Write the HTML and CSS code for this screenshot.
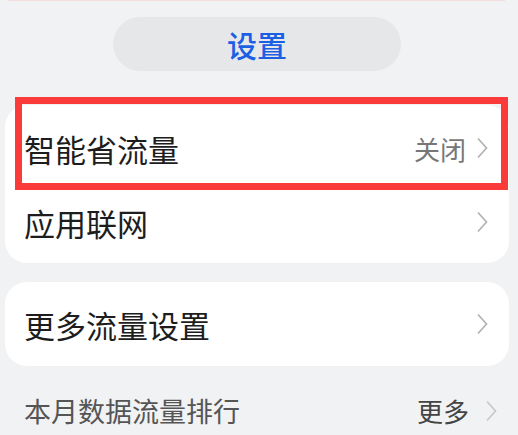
FILE: index.html
```html
<!DOCTYPE html>
<html lang="zh-CN">
<head>
  <meta charset="UTF-8">
  <title>流量管理</title>
  <link rel="stylesheet" href="styles.css">
</head>
<body>
  <div class="page">
    <div class="top-edge"></div>

    <div class="pill-wrap">
      <div class="pill">设置</div>
    </div>

    <!-- 第一组 -->
    <section class="card card-first">
      <div class="row row-a">
        <span class="label">智能省流量</span>
        <span class="value">关闭</span>
        <svg class="chev" viewBox="0 0 11 22"><path d="M1 1.5 L9.5 11 L1 20.5"/></svg>
      </div>
      <div class="row row-a">
        <span class="label">应用联网</span>
        <svg class="chev" viewBox="0 0 11 22"><path d="M1 1.5 L9.5 11 L1 20.5"/></svg>
      </div>
    </section>

    <!-- 第二组 -->
    <section class="card">
      <div class="row row-b">
        <span class="label">更多流量设置</span>
        <svg class="chev" viewBox="0 0 11 22"><path d="M1 1.5 L9.5 11 L1 20.5"/></svg>
      </div>
    </section>

    <div class="sub-head">
      <span class="sub-title">本月数据流量排行</span>
      <span class="sub-more">更多</span>
      <svg class="chev chev-light" viewBox="0 0 11 22"><path d="M1 1.5 L9.5 11 L1 20.5"/></svg>
    </div>

    <div class="highlight"></div>
  </div>
</body>
</html>
```

FILE: styles.css
```css
:root {
  --bg: #f1f2f4;
  --card: #ffffff;
  --text: #1d1d1d;
  --muted: #777777;
  --chev: #b2b2b2;
  --blue: #1b5fe4;
  --font: "Noto Sans CJK SC", "Noto Sans", sans-serif;
}
* {
  box-sizing: border-box;
}
html, body {
  margin: 0;
  background: var(--bg);
}
body {
  font-family: var(--font);
  color: var(--text);
  overflow: hidden;
}
.page {
  position: relative;
  width: 518px;
  height: 435px;
}
.top-edge {
  margin: 0 13px 0 8px;
  height: 1px;
  background: #f3dcdc;
}
/* 顶部按钮 */
.pill-wrap {
  padding: 16px 0 0 113px;
}
.pill {
  width: 288px;
  height: 54px;
  border-radius: 27px;
  background: #e6e7e9;
  color: var(--blue);
  font-size: 30px;
  font-weight: 500;
  display: flex;
  align-items: center;
  justify-content: center;
}
/* 卡片 */
.card {
  margin: 0 9px 0 5px;
  background: var(--card);
  border-radius: 22px;
}
.card-first {
  margin-top: 34px;
  padding: 6px 0 4px;
  margin-bottom: 19px;
}
.row {
  display: flex;
  align-items: center;
  padding: 0 21px 0 19px;
}
.row-a {
  height: 74px;
}
.row-b {
  height: 84px;
}
.label {
  flex: 1;
  font-size: 31px;
  line-height: 1;
}
.value {
  font-size: 26px;
  color: var(--muted);
  margin-right: 11px;
}
.chev {
  width: 11px;
  height: 22px;
  fill: none;
  stroke: var(--chev);
  stroke-width: 1.7;
}
/* 下方小标题 */
.sub-head {
  display: flex;
  align-items: center;
  padding: 25px 21px 0 24px;
}
.sub-title {
  flex: 1;
  font-size: 27px;
  color: #555555;
}
.sub-more {
  font-size: 26px;
  color: #444444;
  margin-right: 17px;
}
.chev-light {
  stroke: #c8c8c8;
}
/* 红色标注框 */
.highlight {
  position: absolute;
  left: 15px;
  top: 97px;
  width: 493px;
  height: 93px;
  border: 7px solid #fb3a3a;
}
```
